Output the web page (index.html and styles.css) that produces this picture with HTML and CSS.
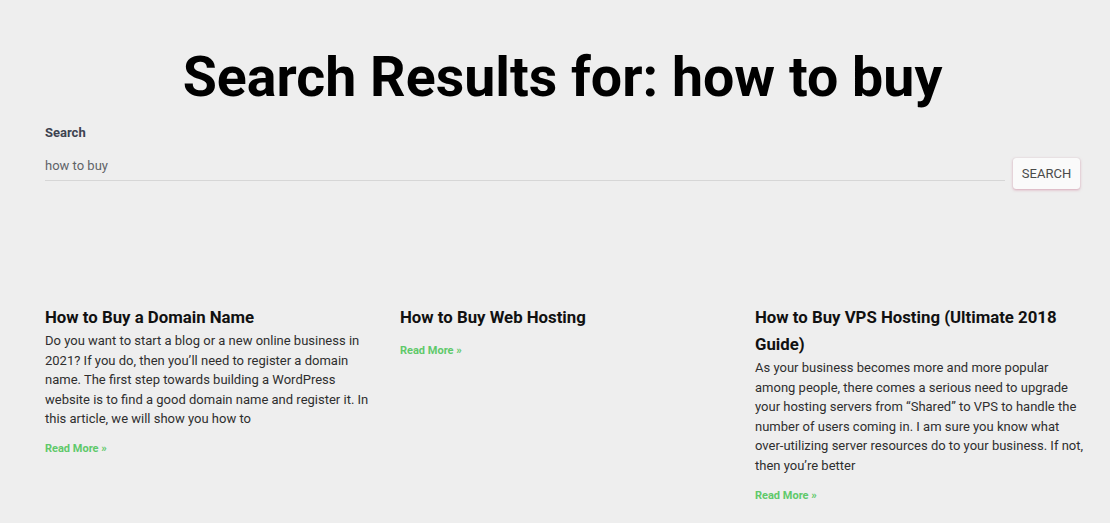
FILE: index.html
```html
<!DOCTYPE html>
<html lang="en">
<head>
<meta charset="utf-8">
<title>Search Results for: how to buy</title>
<link rel="stylesheet" href="styles.css">
</head>
<body>
<main class="page">
  <h1 class="page-title">Search Results for: how to buy</h1>
  <form class="search-form">
    <label class="search-label" for="q">Search</label>
    <div class="search-row">
      <input class="search-input" id="q" type="text" value="how to buy">
      <button class="search-button" type="button">SEARCH</button>
    </div>
  </form>
  <section class="posts">
    <article class="post">
      <h2 class="post-title">How to Buy a Domain Name</h2>
      <p class="post-excerpt">Do you want to start a blog or a new online business in 2021? If you do, then you’ll need to register a domain name. The first step towards building a WordPress website is to find a good domain name and register it. In this article, we will show you how to</p>
      <a class="read-more" href="#">Read More »</a>
    </article>
    <article class="post">
      <h2 class="post-title">How to Buy Web Hosting</h2>
      <a class="read-more" href="#">Read More »</a>
    </article>
    <article class="post">
      <h2 class="post-title">How to Buy VPS Hosting (Ultimate 2018 Guide)</h2>
      <p class="post-excerpt">As your business becomes more and more popular among people, there comes a serious need to upgrade your hosting servers from “Shared” to VPS to handle the number of users coming in. I am sure you know what over-utilizing server resources do to your business. If not, then you’re better</p>
      <a class="read-more" href="#">Read More »</a>
    </article>
  </section>
</main>
</body>
</html>
```

FILE: styles.css
```css
* { box-sizing: border-box; }
html, body {
  margin: 0;
  padding: 0;
  background: #eeeeee;
  font-family: Roboto, "Liberation Sans", Arial, sans-serif;
}
.page {
  padding: 44px 30px 0 45px;
}
.page-title {
  margin: 0;
  font-size: 55.5px;
  line-height: 67px;
  font-weight: 700;
  color: #000;
  text-align: center;
}
.search-form {
  margin-top: 12px;
  display: flex;
  flex-direction: column;
}
.search-label {
  font-size: 13px;
  line-height: 20px;
  font-weight: 700;
  color: #3d4350;
  margin-bottom: 7px;
}
.search-row {
  display: flex;
  align-items: flex-start;
  gap: 8px;
}
.search-input {
  flex: 1;
  height: 31px;
  border: none;
  border-bottom: 1px solid #d6d6d6;
  background: transparent;
  padding: 0;
  font-family: inherit;
  font-size: 13px;
  color: #5f6368;
  outline: none;
}
.search-button {
  margin-top: 8px;
  height: 31px;
  width: 67px;
  padding: 0;
  border: none;
  border-radius: 3px;
  background: #fafafa;
  color: #4a4a4a;
  font-family: inherit;
  font-size: 13px;
  box-shadow: 0 1px 3px rgba(200, 110, 140, 0.55), 0 0 1px rgba(0,0,0,0.15);
}
.posts {
  margin-top: 115px;
  margin-right: -4px;
  display: grid;
  grid-template-columns: repeat(3, 1fr);
  column-gap: 26px;
  align-items: start;
}
.post {
  display: flex;
  flex-direction: column;
  align-items: flex-start;
}
.post-title {
  margin: 0;
  font-size: 16.8px;
  line-height: 27px;
  font-weight: 700;
  color: #111;
}
.post-excerpt {
  margin: 0;
  font-size: 13px;
  line-height: 19.6px;
  color: #2e2e2e;
}
.read-more {
  margin-top: 10px;
  font-size: 11px;
  line-height: 20px;
  font-weight: 700;
  color: #5fc96a;
  text-decoration: none;
}
```
